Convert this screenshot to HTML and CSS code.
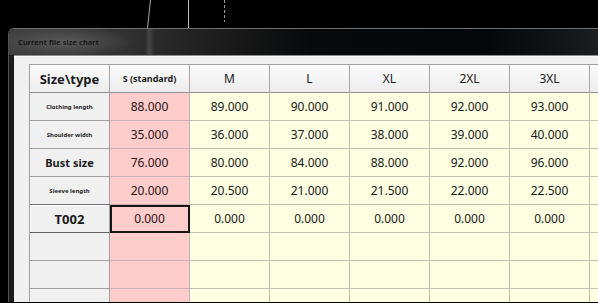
FILE: index.html
```html
<!DOCTYPE html>
<html lang="en">

<head>
    <meta charset="UTF-8">
    <meta name="viewport" content="width=device-width, initial-scale=1.0">
    <title>Current file size chart</title>
    <link rel="stylesheet" href="styles.css">
</head>

<body>
    <!-- lines of the window behind -->
    <svg class="backdrop" width="598" height="28" viewBox="0 0 598 28">
        <line x1="150.5" y1="0" x2="147.5" y2="28" stroke="#a8a8a8" stroke-width="1" />
        <line x1="188.5" y1="0" x2="188.5" y2="28" stroke="#c0c0c0" stroke-width="1" />
        <line x1="224.5" y1="0" x2="224.5" y2="22" stroke="#9a9a9a" stroke-width="1" stroke-dasharray="3 2" />
    </svg>

    <div class="window">
        <div class="titlebar">
            <span class="title">Current file size chart</span>
        </div>

        <div class="frame">
            <div class="client">
                <div class="chart">
                    <!-- header -->
                    <div class="cell head">
                        <span class="big">Size\type</span>
                    </div>
                    <div class="cell head"><span class="mid">S (standard)</span></div>
                    <div class="cell head">M</div>
                    <div class="cell head">L</div>
                    <div class="cell head">XL</div>
                    <div class="cell head">2XL</div>
                    <div class="cell head">3XL</div>
                    <div class="cell head"></div>

                    <!-- Clothing length -->
                    <div class="cell label"><span class="tiny">Clothing length</span></div>
                    <div class="cell std">88.000</div>
                    <div class="cell val">89.000</div>
                    <div class="cell val">90.000</div>
                    <div class="cell val">91.000</div>
                    <div class="cell val">92.000</div>
                    <div class="cell val">93.000</div>
                    <div class="cell val"></div>

                    <!-- Shoulder width -->
                    <div class="cell label"><span class="tiny">Shoulder width</span></div>
                    <div class="cell std">35.000</div>
                    <div class="cell val">36.000</div>
                    <div class="cell val">37.000</div>
                    <div class="cell val">38.000</div>
                    <div class="cell val">39.000</div>
                    <div class="cell val">40.000</div>
                    <div class="cell val"></div>

                    <!-- Bust size -->
                    <div class="cell label"><span class="bold">Bust size</span></div>
                    <div class="cell std">76.000</div>
                    <div class="cell val">80.000</div>
                    <div class="cell val">84.000</div>
                    <div class="cell val">88.000</div>
                    <div class="cell val">92.000</div>
                    <div class="cell val">96.000</div>
                    <div class="cell val"></div>

                    <!-- Sleeve length -->
                    <div class="cell label"><span class="tiny">Sleeve length</span></div>
                    <div class="cell std">20.000</div>
                    <div class="cell val">20.500</div>
                    <div class="cell val">21.000</div>
                    <div class="cell val">21.500</div>
                    <div class="cell val">22.000</div>
                    <div class="cell val">22.500</div>
                    <div class="cell val"></div>

                    <!-- T002 -->
                    <div class="cell label current"><span class="big">T002</span></div>
                    <div class="cell std selected">0.000</div>
                    <div class="cell val">0.000</div>
                    <div class="cell val">0.000</div>
                    <div class="cell val">0.000</div>
                    <div class="cell val">0.000</div>
                    <div class="cell val">0.000</div>
                    <div class="cell val"></div>

                    <!-- empty rows -->
                    <div class="cell label"></div>
                    <div class="cell std"></div>
                    <div class="cell val"></div>
                    <div class="cell val"></div>
                    <div class="cell val"></div>
                    <div class="cell val"></div>
                    <div class="cell val"></div>
                    <div class="cell val"></div>

                    <div class="cell label"></div>
                    <div class="cell std"></div>
                    <div class="cell val"></div>
                    <div class="cell val"></div>
                    <div class="cell val"></div>
                    <div class="cell val"></div>
                    <div class="cell val"></div>
                    <div class="cell val"></div>

                    <div class="cell label"></div>
                    <div class="cell std"></div>
                    <div class="cell val"></div>
                    <div class="cell val"></div>
                    <div class="cell val"></div>
                    <div class="cell val"></div>
                    <div class="cell val"></div>
                    <div class="cell val"></div>
                </div>
            </div>
        </div>
    </div>
</body>

</html>
```

FILE: styles.css
```css
body {
    margin: 0;
    padding: 0;
    height: 303px;
    overflow: hidden;
    position: relative;
    background-color: #000;
    font-family: 'Noto Sans', 'Open Sans', sans-serif;
}

.backdrop {
    position: absolute;
    left: 0;
    top: 0;
}

.window {
    margin: 28px 0 0 8px;
    border-top: 1px solid #707070;
    border-left: 1px solid #505050;
    border-top-left-radius: 6px;
    background-color: #181818;
    overflow: hidden;
}

.titlebar {
    height: 26px;
    display: flex;
    align-items: center;
    padding-left: 9px;
    background:
        linear-gradient(to right, rgba(255, 255, 255, 0) 136px, rgba(255, 255, 255, 0.12) 140px, rgba(255, 255, 255, 0) 146px),
        radial-gradient(ellipse 70px 16px at 55px 13px, #5a5a5a, rgba(90, 90, 90, 0)),
        linear-gradient(to right, #3e3e3e 0, #303030 120px, #1a1a1a 220px, #07090b 300px, #05080a 480px, #14171a 560px, #1c1f22 590px);
}

.title {
    font-size: 7.5px;
    font-weight: 600;
    color: #111;
    letter-spacing: 0.1px;
}

.frame {
    padding-left: 5px;
    background-color: #1a1a1a;
}

.client {
    height: 247px;
    box-sizing: border-box;
    padding: 8px 0 0 15px;
    background-color: #f0f0f0;
    border-top: 1px solid #8c8c8c;
    box-shadow: inset 0 1px 0 #fafafa;
    overflow: hidden;
}

.chart {
    display: grid;
    grid-template-columns: repeat(8, 80px);
    grid-auto-rows: 28px;
    width: max-content;
    border-top: 1px solid #a0a0a0;
    border-left: 1px solid #a0a0a0;
}

.cell {
    box-sizing: border-box;
    display: flex;
    align-items: center;
    justify-content: center;
    border-right: 1px solid #c2c2b4;
    border-bottom: 1px solid #c2c2b4;
    font-size: 12px;
    color: #1a1a1a;
    white-space: nowrap;
}

.head {
    background: linear-gradient(#fcfcfc, #ececec);
    border-right-color: #a4a4a4;
    border-bottom-color: #909090;
    color: #1c1c1c;
}

.label {
    background-color: #f0f0f0;
    border-right-color: #a0a0a0;
    border-bottom-color: #a0a0a0;
}

.std {
    background-color: #ffcccc;
    border-right-color: #c8b0b0;
    border-bottom-color: #c8b0b0;
    color: #2a1414;
}

.val {
    background-color: #ffffe1;
}

.current {
    border-bottom-color: #606060;
    box-shadow: 0 -1px 0 #707070, inset 1px 1px 0 #ffffff;
}

.selected {
    outline: 2px solid #151515;
    outline-offset: -2px;
}

.big {
    font-size: 13px;
    font-weight: 700;
}

.mid {
    font-size: 9px;
    font-weight: 700;
}

.bold {
    font-size: 11px;
    font-weight: 700;
}

.tiny {
    font-size: 6px;
    font-weight: 700;
    color: #222;
}
```
